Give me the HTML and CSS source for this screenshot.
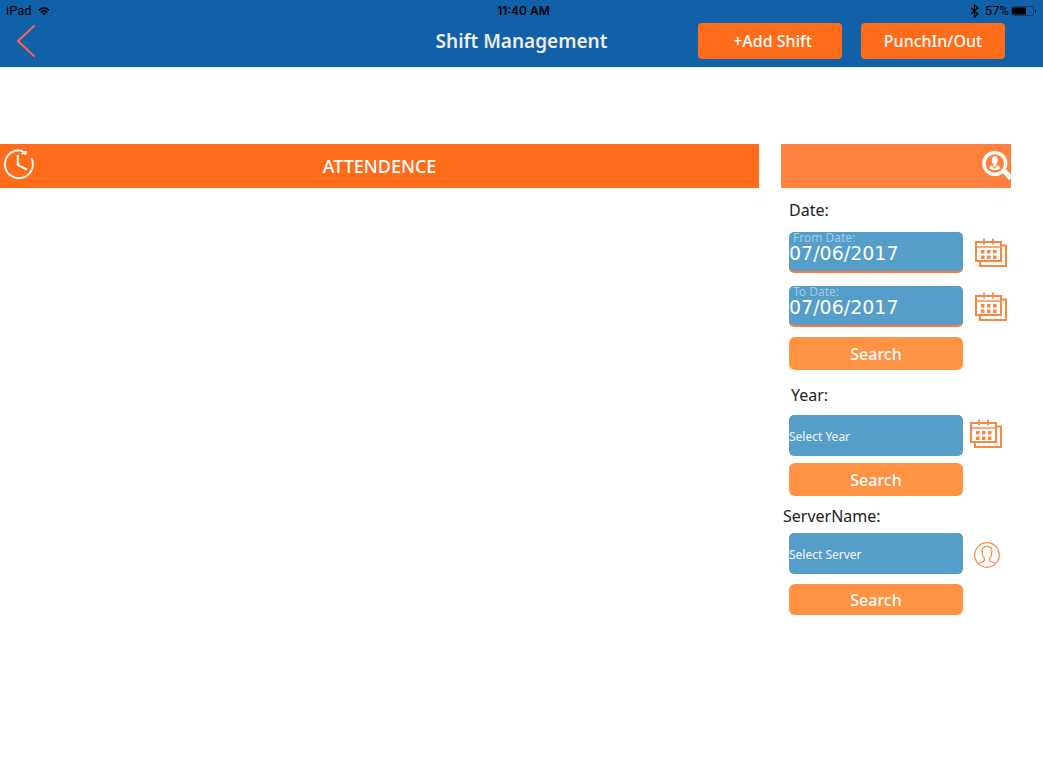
FILE: index.html
```html
<!DOCTYPE html>
<html lang="en">
<head>
<meta charset="utf-8">
<meta name="viewport" content="width=device-width, initial-scale=1">
<title>Shift Management</title>
<link rel="stylesheet" href="styles.css">
</head>
<body>
<svg class="sprite" aria-hidden="true">
  <symbol id="calendar" viewBox="0 0 32 30">
    <g fill="none" stroke="currentColor" stroke-width="2">
      <path d="M1 4H26V23H1Z"/>
      <path d="M26 7.500H31V28H5V23"/>
      <path d="M1 9H26" stroke-width="1.400"/>
      <path d="M9 .500V6.500M18 .500V6.500" stroke-width="1.800"/>
    </g>
    <path fill="currentColor" d="M6 12h3.500v3.500H6zM12 12h3.500v3.500H12zM18 12h3.500v3.500H18zM6 17.500h3.500V21H6zM12 17.500h3.500V21H12zM18 17.500h3.500V21H18z"/>
  </symbol>
</svg>
<header class="header">
  <div class="status">
    <div class="status-side">
      <span>iPad</span>
      <svg width="12" height="9" viewBox="0 0 14 10" fill="none" stroke="#000" stroke-width="1.800" aria-hidden="true"><path d="M1 3.600C4.400.2 9.600.2 13 3.600M3.200 6C5.400 3.900 8.600 3.900 10.800 6"/><path d="M4.800 7.200C6.100 6 7.900 6 9.200 7.200L7 9.500Z" fill="#000" stroke="none"/></svg>
    </div>
    <strong class="status-time">11:40 AM</strong>
    <div class="status-side status-right">
      <svg class="bluetooth" width="9" height="14" viewBox="0 0 9 14" fill="none" stroke="#000" stroke-width="1.200" aria-hidden="true"><path d="M1 4L8 10L4.500 13V1L8 4L1 10"/></svg>
      <span>57%</span>
      <svg width="26" height="10" viewBox="0 0 26 10" aria-hidden="true"><rect x=".5" y=".5" width="22" height="9" rx="2" fill="none" stroke="#0b3f6d"/><path d="M2 1.500H15V8.500H2Q1 8.500 1 7.500V2.500Q1 1.500 2 1.500Z"/><path d="M24 3Q26 5 24 7Z"/></svg>
    </div>
  </div>
  <nav class="nav">
    <button class="back" type="button" aria-label="Back"><svg width="20" height="34" viewBox="0 0 20 34" fill="none" stroke="#ff624f" stroke-width="2" stroke-linecap="round"><path d="M18 2L2 17L18 32"/></svg></button>
    <h1 class="title">Shift Management</h1>
    <div class="actions">
      <button class="action action-add" type="button">+Add Shift</button>
      <button class="action" type="button">PunchIn/Out</button>
    </div>
  </nav>
</header>
<main class="main">
  <section class="attendance">
    <div class="bar">
      <svg class="clock" width="32" height="32" viewBox="0 0 32 32" fill="none" stroke="#fff" stroke-width="1.900" aria-hidden="true"><path d="M29.400 10A14 14 0 1 1 16 2.200Q20 2.200 22.500 4.500"/><path d="M24.200 3V6.300L19.500 5.600Z" fill="#fff" stroke-width="1"/><path d="M15.800 7V17L24.800 21.500" stroke-width="2"/></svg>
      <h2 class="bar-title">ATTENDENCE</h2>
    </div>
  </section>
  <aside class="filters">
    <div class="bar bar-search">
      <svg width="30" height="32" viewBox="0 0 30 32" aria-hidden="true"><circle cx="13.800" cy="13.500" r="10.900" fill="none" stroke="#fff" stroke-width="3.400"/><path d="M21 22L24.500 19L30 24.500V28.500L27.800 30Z" fill="#fff"/><ellipse cx="13.800" cy="10.300" rx="3" ry="4" fill="#fff"/><path d="M12.300 13H15.300V15.500L13.800 17L12.300 15.500Z" fill="#fff"/><path d="M8.300 18.300Q8.500 16.300 11 15.600L13.800 19L16.600 15.600Q19.100 16.300 19.300 18.300Q13.800 22 8.300 18.300Z" fill="#fff"/></svg>
    </div>
    <form class="group">
      <h3 class="heading heading-date">Date:</h3>
      <div class="row row-date">
        <div class="field"><label class="float" for="from">From Date:</label><input class="date" id="from" type="text" value="07/06/2017"></div>
        <button class="pick" type="button" aria-label="Pick from date"><svg width="32" height="30"><use href="#calendar"/></svg></button>
      </div>
      <div class="row row-date">
        <div class="field"><label class="float" for="to">To Date:</label><input class="date" id="to" type="text" value="07/06/2017"></div>
        <button class="pick" type="button" aria-label="Pick to date"><svg width="32" height="30"><use href="#calendar"/></svg></button>
      </div>
      <button class="search search-date" type="button">Search</button>
    </form>
    <form class="group">
      <label class="heading heading-year" for="year">Year:</label>
      <div class="row row-year">
        <select class="select" id="year"><option>Select Year</option></select>
        <button class="pick pick-year" type="button" aria-label="Pick year"><svg width="32" height="30"><use href="#calendar"/></svg></button>
      </div>
      <button class="search" type="button">Search</button>
    </form>
    <form class="group">
      <label class="heading heading-server" for="server">ServerName:</label>
      <div class="row row-server">
        <select class="select" id="server"><option>Select Server</option></select>
        <button class="pick pick-server" type="button" aria-label="Pick server"><svg width="26" height="26" viewBox="0 0 26 26" fill="none" stroke="currentColor" stroke-width="1.200"><circle cx="13" cy="13" r="12.300"/><path d="M4.500 21.600C6 20 9.500 20.300 10.300 18.400V16C8.500 14.500 8.300 12.500 8.200 11C7.800 7 8.500 4.400 13 4.400S18.200 7 17.800 11C17.700 12.500 17.500 14.500 15.700 16V18.400C16.500 20.300 20 20 21.500 21.600"/></svg></button>
      </div>
      <button class="search search-server" type="button">Search</button>
    </form>
  </aside>
</main>
</body>
</html>
```
FILE: styles.css
```css
* { box-sizing: border-box; }
body {
  margin: 0;
  background: #fff;
  color: #222;
  font-family: "Noto Sans", "Open Sans", sans-serif;
}
button, input, select { font-family: inherit; }
button { border: 0; padding: 0; background: none; cursor: pointer; }
svg { display: block; }
.sprite { position: absolute; width: 0; height: 0; }

.header { background: #1161a9; padding-bottom: 7px; }
.status {
  display: grid;
  grid-template-columns: 1fr auto 1fr;
  align-items: center;
  height: 22px;
  padding: 0 6px;
  color: #000;
  font: 13px/22px Roboto, sans-serif;
}
.status-side { display: flex; align-items: center; gap: 6px; }
.status-right { justify-content: flex-end; gap: 2px; }
.bluetooth { margin-right: 4px; }
.status-time { padding-left: 4px; font: 600 12px/22px Inter, sans-serif; }
.nav {
  display: grid;
  grid-template-columns: 1fr auto 1fr;
  align-items: center;
  min-height: 38px;
  padding: 0 38px;
}
.back { justify-self: start; margin-left: -22px; }
.title { margin: 0; color: #ececec; font-size: 19px; font-weight: 600; line-height: 38px; }
.actions { display: flex; justify-content: flex-end; gap: 19px; }
.action {
  width: 144px;
  height: 36px;
  border-radius: 4px;
  background: #ff6c1a;
  color: #fff;
  font-size: 16px;
  font-weight: 500;
}
.action-add { padding-left: 5px; }

.main { display: flex; gap: 22px; padding: 77px 32px 32px 0; }
.attendance { flex: 1; }
.filters { width: 230px; }
.bar {
  display: grid;
  grid-template-columns: 36px 1fr 36px;
  align-items: center;
  height: 44px;
  background: #ff6c1a;
}
.clock { margin: 0 0 4px 2px; }
.bar-title { margin: 0; color: #fff; font-size: 18px; font-weight: 500; text-align: center; }
.bar-search { display: flex; justify-content: flex-end; background: #ff813d; }

.group { display: flex; flex-direction: column; padding-left: 8px; }
.heading { margin: 0; font-size: 16px; font-weight: 400; }
.heading-date { line-height: 44px; }
.heading-year { padding: 5px 0 0 2px; line-height: 40px; }
.heading-server { margin-left: -8px; padding: 3px 0 0 2px; line-height: 34px; }
.row { display: flex; align-items: center; gap: 12px; }
.row-date { margin-bottom: 13px; }
.row-year { gap: 7px; margin-bottom: 7px; }
.row-server { gap: 11px; margin-bottom: 10px; }
.field {
  display: flex;
  flex-direction: column;
  width: 174px;
  height: 41px;
  border-bottom: 2px solid #ff7a33;
  border-radius: 5px;
  background: #549ec9;
}
.float { padding-left: 4px; color: #a5cce3; font-size: 12px; line-height: 12px; }
.date {
  width: 100%;
  height: 18px;
  padding: 0;
  border: 0;
  outline: 0;
  background: none;
  color: #fff;
  font: 19px/18px "DejaVu Sans", sans-serif;
}
.select {
  appearance: none;
  width: 174px;
  height: 41px;
  padding: 2px 0 0;
  border: 0;
  border-radius: 5px;
  background: #549ec9;
  color: #f4f8fb;
  font-size: 12px;
}
.pick { color: #f98741; }
.pick-year { margin-bottom: 4px; }
.pick-server { margin-top: 2px; }
.search {
  width: 174px;
  height: 33px;
  border-radius: 6px;
  background: #ff9243;
  color: #fff;
  font-size: 16px;
  font-weight: 500;
}
.search-date { margin-top: -3px; }
.search-server { height: 31px; }
```
